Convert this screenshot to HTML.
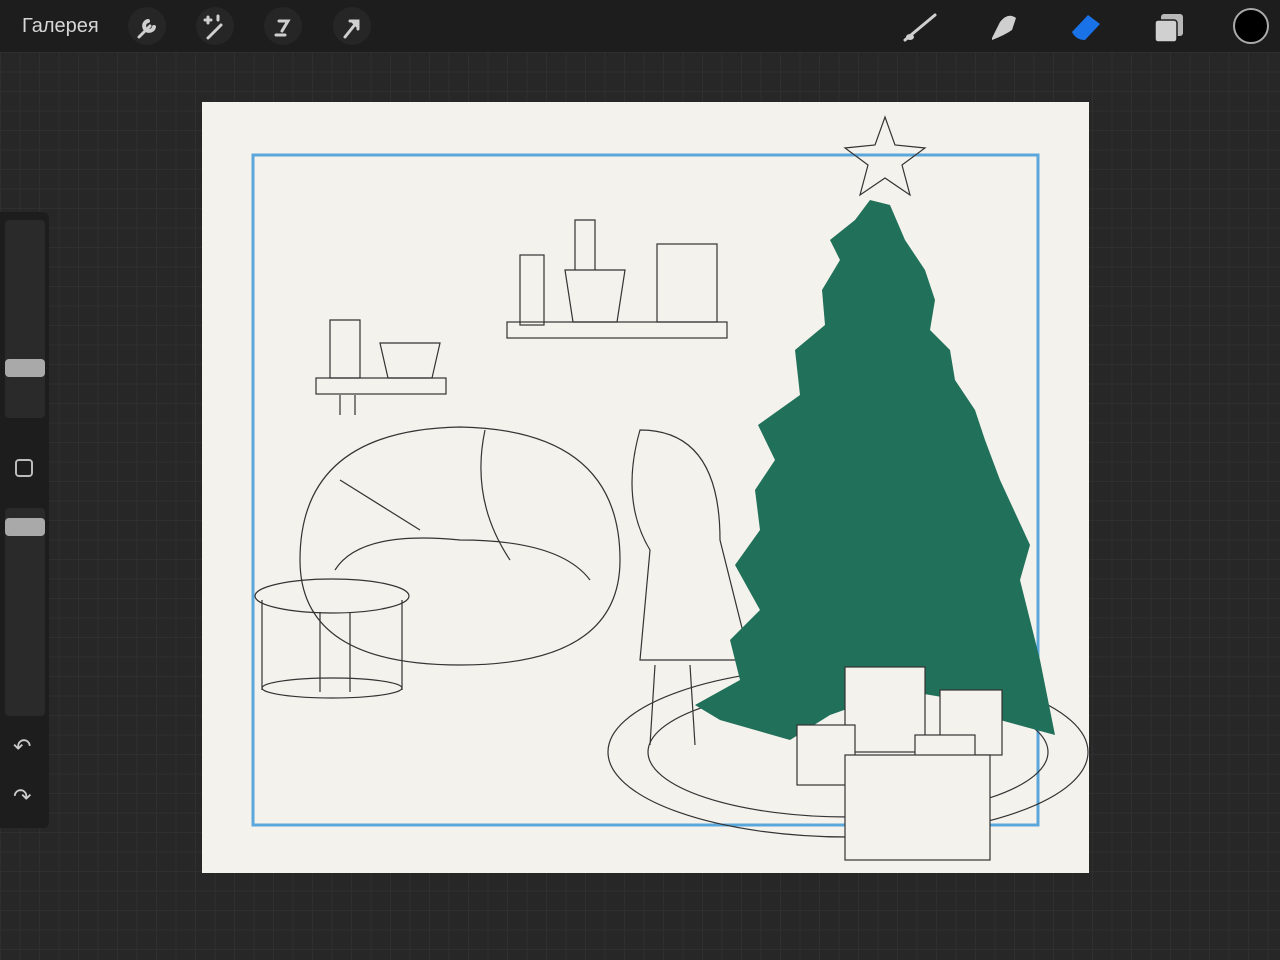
<!DOCTYPE html>
<html><head><meta charset="utf-8"><style>
html,body{margin:0;width:1280px;height:960px;overflow:hidden;background:#272727;font-family:"Liberation Sans","DejaVu Sans",sans-serif}
.grid{position:absolute;left:0;top:52px;width:1280px;height:908px;background-color:#272727;background-image:linear-gradient(#2f2f2f 1px,transparent 1px),linear-gradient(90deg,#2f2f2f 1px,transparent 1px);background-size:19.5px 19.5px}
.bar{position:absolute;left:0;top:0;width:1280px;height:52px;background:#1d1d1d}
.gal{position:absolute;left:22px;top:15px;color:#d6d6d6;font-size:20px}
.ib{position:absolute;top:7px;width:38px;height:38px;border-radius:50%;background:#262626}
.side{position:absolute;left:0;top:212px;width:49px;height:616px;background:#1d1d1d;border-radius:0 6px 6px 0}
.sl{position:absolute;left:5px;width:40px;background:#2a2a2a;border-radius:4px}
.knob{position:absolute;left:5px;width:40px;height:18px;background:#a9a9a9;border-radius:4px}
.canvas{position:absolute;left:202px;top:102px;width:887px;height:771px;background:#f4f2ec}
</style></head><body>
<div class="grid"></div>
<div class="bar">
<div class="gal">Галерея</div>
<div class="ib" style="left:128px"></div><div class="ib" style="left:196px"></div><div class="ib" style="left:264px"></div><div class="ib" style="left:333px"></div>
<svg width="1280" height="52" style="position:absolute;left:0;top:0">
<g stroke="#cfcfcf" stroke-width="3" stroke-linecap="round" fill="none">
<path d="M139 37 L150 26"/><path d="M148 21a5 5 0 1 0 6 6" stroke-width="4"/>
<path d="M208 38 L221 25"/><path d="M208 17v6M205 20h6M218 16v4"/>
<path d="M279 21h9l-6 10M276 35h9"/>
<path d="M345 37 L357 22"/><path d="M350 21h8v8" fill="#cfcfcf"/>
<path d="M905 40 L935 15"/>
</g>
<ellipse cx="910" cy="37" rx="4" ry="3" fill="#cfcfcf"/>
<path d="M992 38 L1000 22 Q1008 12 1016 18 L1012 30 Q1005 35 992 40Z" fill="#cfcfcf"/>
<path d="M1072 32 L1088 15 L1100 24 L1085 40 Q1076 40 1072 32Z" fill="#1a72e8"/>
<rect x="1161" y="14" width="22" height="22" rx="3" fill="#b8b8b8"/>
<rect x="1155" y="20" width="22" height="22" rx="3" fill="#d0d0d0" stroke="#1d1d1d" stroke-width="1.5"/>
<circle cx="1251" cy="26" r="17" fill="#000" stroke="#aaa" stroke-width="2"/>
</svg>
</div>
<div class="side">
<div class="sl" style="top:8px;height:198px"></div><div class="knob" style="top:147px"></div>
<div style="position:absolute;left:15px;top:247px;width:18px;height:18px;border:2px solid #bbb;border-radius:4px;box-sizing:border-box"></div>
<div class="sl" style="top:296px;height:208px"></div><div class="knob" style="top:306px"></div>
<div style="position:absolute;left:13px;top:522px;color:#ccc;font-size:22px">↶</div>
<div style="position:absolute;left:13px;top:572px;color:#ccc;font-size:22px">↷</div>
</div>
<div class="canvas"></div>
<svg width="1280" height="960" style="position:absolute;left:0;top:0">
<rect x="253" y="155" width="785" height="670" fill="none" stroke="#5aa7dc" stroke-width="3"/>
<g fill="none" stroke="#333" stroke-width="1.2">
<ellipse cx="848" cy="752" rx="240" ry="85"/><ellipse cx="848" cy="752" rx="200" ry="65"/>
<path d="M300 560 Q300 430 460 427 Q620 430 620 560 Q620 665 460 665 Q300 665 300 560Z"/>
<path d="M335 570 Q360 530 460 540 Q560 540 590 580"/>
<path d="M485 430 Q470 500 510 560 M340 480 L420 530"/>
<ellipse cx="332" cy="596" rx="77" ry="17"/><ellipse cx="332" cy="688" rx="70" ry="10"/>
<path d="M262 600v90M402 600v90M320 612v80M350 612v80"/>
<rect x="316" y="378" width="130" height="16"/><rect x="507" y="322" width="220" height="16"/>
<path d="M380 343h60l-8 35h-44z"/><path d="M565 270h60l-8 52h-44z"/>
<path d="M330 320h30v58h-30z M340 395v20M355 395v20"/>
<rect x="657" y="244" width="60" height="78"/><rect x="520" y="255" width="24" height="70"/>
<path d="M575 270v-50h20v50"/>
<path d="M640 430 Q620 500 650 550 L640 660 L750 660 L720 540 Q720 430 640 430Z"/>
<path d="M655 665l-5 80M690 665l5 80"/>
<polygon points="885,117 895,145 925,148 902,165 910,195 885,178 860,195 868,165 845,148 875,145"/>
</g>
<path fill="#20705a" d="M870 200 L890 205 L905 240 L925 270 L935 300 L930 330 L950 350 L955 380 L975 410 L985 440 L1000 480 L1030 545 L1020 580 L1030 620 L1040 660 L1048 700 L1055 735 L1000 720 L960 700 L900 690 L830 715 L790 740 L720 720 L695 705 L740 680 L730 640 L760 610 L735 565 L760 530 L755 490 L775 460 L758 425 L800 395 L795 350 L825 325 L822 290 L840 260 L830 240 L855 220 Z"/>
<g fill="#f4f2ec" stroke="#333" stroke-width="1.2">
<rect x="845" y="667" width="80" height="85"/><rect x="940" y="690" width="62" height="65"/>
<rect x="797" y="725" width="58" height="60"/><rect x="915" y="735" width="60" height="35"/>
<rect x="845" y="755" width="145" height="105"/>
</g>
</svg>
</body></html>
